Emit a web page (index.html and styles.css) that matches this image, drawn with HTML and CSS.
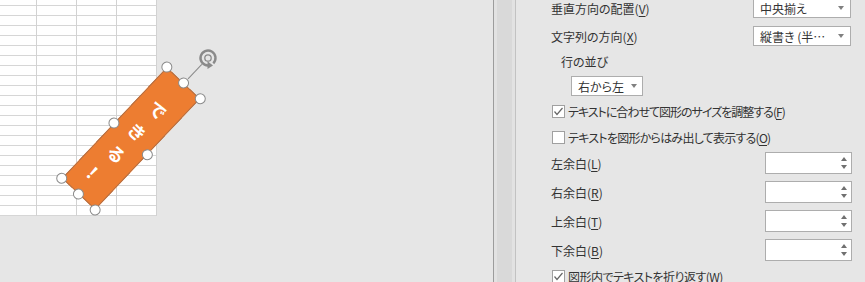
FILE: index.html
```html
<!DOCTYPE html>
<html lang="ja">
<head>
<meta charset="utf-8">
<link rel="stylesheet" href="styles.css">
</head>
<body>
<div class="canvas">
  <div class="sheet"></div>
  <div class="shape">
    <div class="shape-text">できる！</div>
    <span class="rot-line"></span>
    <span class="h h-tl"></span><span class="h h-tm"></span><span class="h h-tr"></span>
    <span class="h h-ml"></span><span class="h h-mr"></span>
    <span class="h h-bl"></span><span class="h h-bm"></span><span class="h h-br"></span>
  </div>
  <svg class="rot-icon" width="22" height="22" viewBox="0 0 22 22">
    <path d="M16.3 16.3 A7.5 7.5 0 1 0 11 18.5" fill="none" stroke="#8a8a8a" stroke-width="2.4"/>
    <circle cx="11" cy="11" r="3.2" fill="none" stroke="#8a8a8a" stroke-width="1.3"/>
    <path d="M16 18.5 L10.5 14.3 L10.5 22 Z" fill="#8a8a8a"/>
  </svg>
</div>
<div class="splitter"></div>
<div class="panel">
  <div class="row r1">
    <span class="label">垂直方向の配置(<u>V</u>)</span>
    <div class="select sel-wide"><span>中央揃え</span><span class="caret"></span></div>
  </div>
  <div class="row r2">
    <span class="label">文字列の方向(<u>X</u>)</span>
    <div class="select sel-wide"><span>縦書き (半⋯</span><span class="caret"></span></div>
  </div>
  <div class="row r3">
    <span class="label">行の並び</span>
  </div>
  <div class="row r4">
    <div class="select sel-small"><span>右から左</span><span class="caret"></span></div>
  </div>
  <div class="row r5 check-row">
    <span class="check"><svg width="11" height="11" viewBox="0 0 11 11"><polyline points="1.5,5.5 4,8.5 9.5,2" fill="none" stroke="#666" stroke-width="1.2"/></svg></span>
    <span class="label tight-1">テキストに合わせて図形のサイズを調整する(<u>F</u>)</span>
  </div>
  <div class="row r6 check-row">
    <span class="check"></span>
    <span class="label tight-2">テキストを図形からはみ出して表示する(<u>O</u>)</span>
  </div>
  <div class="row spin-row">
    <span class="label">左余白(<u>L</u>)</span>
    <div class="spin"><span class="arrows"><span class="up"></span><span class="down"></span></span></div>
  </div>
  <div class="row spin-row">
    <span class="label">右余白(<u>R</u>)</span>
    <div class="spin"><span class="arrows"><span class="up"></span><span class="down"></span></span></div>
  </div>
  <div class="row spin-row">
    <span class="label">上余白(<u>T</u>)</span>
    <div class="spin"><span class="arrows"><span class="up"></span><span class="down"></span></span></div>
  </div>
  <div class="row spin-row last-spin">
    <span class="label">下余白(<u>B</u>)</span>
    <div class="spin"><span class="arrows"><span class="up"></span><span class="down"></span></span></div>
  </div>
  <div class="row r-last check-row">
    <span class="check"><svg width="11" height="11" viewBox="0 0 11 11"><polyline points="1.5,5.5 4,8.5 9.5,2" fill="none" stroke="#666" stroke-width="1.2"/></svg></span>
    <span class="label tight-3">図形内でテキストを折り返す(W)</span>
  </div>
</div>
</body>
</html>
```
FILE: styles.css
```css
html, body {
  margin: 0;
  padding: 0;
}
body {
  width: 865px;
  height: 282px;
  overflow: hidden;
  background: #e6e6e6;
  display: flex;
  font-family: "Noto Sans CJK JP", "Noto Sans", sans-serif;
  font-size: 12px;
  color: #333;
  font-feature-settings: "palt";
}
.canvas {
  width: 493px;
  flex: none;
  position: relative;
}
.sheet {
  width: 157px;
  height: 216px;
  background-color: #fff;
  background-image:
    linear-gradient(to right, #d2d2d2 1px, transparent 1px),
    linear-gradient(to bottom, #d6d6d6 1px, transparent 1px);
  background-size: 40px 100%, 100% 10px;
  background-position: 36px 0, 0 5px;
}
.shape {
  position: absolute;
  left: 108px;
  top: 61.5px;
  width: 46px;
  height: 153px;
  background: #ed7d31;
  box-shadow: inset 0 0 0 1px #b07048;
  transform: rotate(43.4deg);
  display: flex;
  align-items: center;
  justify-content: center;
}
.shape-text {
  writing-mode: vertical-rl;
  color: #fff;
  font-size: 18px;
  letter-spacing: 12px;
  margin-top: 24px;
  font-weight: 700;
}
.h {
  position: absolute;
  width: 9px;
  height: 9px;
  border: 1.5px solid #8a8a8a;
  border-radius: 50%;
  background: #fff;
  transform: translate(-50%, -50%);
}
.h-tl { left: 0; top: 0; }
.h-tm { left: 50%; top: 0; }
.h-tr { left: 100%; top: 0; }
.h-ml { left: 0; top: 50%; }
.h-mr { left: 100%; top: 50%; }
.h-bl { left: 0; top: 100%; }
.h-bm { left: 50%; top: 100%; }
.h-br { left: 100%; top: 100%; }
.rot-line {
  position: absolute;
  left: 50%;
  top: -26px;
  width: 1px;
  height: 20px;
  background: #8a8a8a;
}
.rot-icon {
  position: absolute;
  left: 197px;
  top: 47px;
}
.splitter {
  width: 21px;
  flex: none;
  border-left: 1px solid #9c9c9c;
  border-right: 1px solid #c2c2c2;
  background: linear-gradient(to right, #e2e2e2 0 3px, #d9d9d9 3px 18px, #e2e2e2 18px);
}
.panel {
  flex: 1;
  padding: 0 14px 0 35px;
  display: flex;
  flex-direction: column;
}
.row {
  display: flex;
  align-items: center;
  justify-content: space-between;
  flex: none;
}
.label {
  white-space: nowrap;
}
.label u {
  text-underline-offset: 2px;
}
.tight-1 { letter-spacing: -1px; }
.tight-2 { letter-spacing: -0.75px; }
.tight-3 { letter-spacing: -0.55px; }
.r1 { height: 28px; margin-top: -6px; }
.r2 { height: 28px; }
.r3 { height: 22px; padding-left: 10px; }
.r4 { height: 28px; padding-left: 20px; justify-content: flex-start; }
.r5 { height: 22px; }
.r6 { height: 30px; }
.spin-row { height: 22px; margin-bottom: 7px; margin-right: -1px; }
.last-spin { margin-bottom: 0; }
.r-last { height: 30px; }
.check-row {
  justify-content: flex-start;
  gap: 3px;
  padding-left: 1px;
}
.select {
  box-sizing: border-box;
  height: 20px;
  background: #fff;
  border: 1px solid #adadad;
  display: flex;
  align-items: center;
  justify-content: space-between;
  padding: 0 6px 0 6px;
  white-space: nowrap;
}
.sel-wide { width: 98px; }
.sel-small { width: 72px; padding-right: 5px; }
.caret {
  width: 0;
  height: 0;
  border-left: 3.5px solid transparent;
  border-right: 3.5px solid transparent;
  border-top: 4px solid #808080;
}
.check {
  box-sizing: border-box;
  width: 13px;
  height: 13px;
  background: #fff;
  border: 1px solid #a0a0a0;
  display: flex;
  align-items: center;
  justify-content: center;
}
.spin {
  box-sizing: border-box;
  width: 87px;
  height: 22px;
  background: #fff;
  border: 1px solid #adadad;
  display: flex;
  justify-content: flex-end;
  align-items: center;
  padding-right: 4px;
}
.arrows {
  display: flex;
  flex-direction: column;
  gap: 4px;
}
.up {
  width: 0;
  height: 0;
  border-left: 3.5px solid transparent;
  border-right: 3.5px solid transparent;
  border-bottom: 4px solid #707070;
}
.down {
  width: 0;
  height: 0;
  border-left: 3.5px solid transparent;
  border-right: 3.5px solid transparent;
  border-top: 4px solid #707070;
}
```
